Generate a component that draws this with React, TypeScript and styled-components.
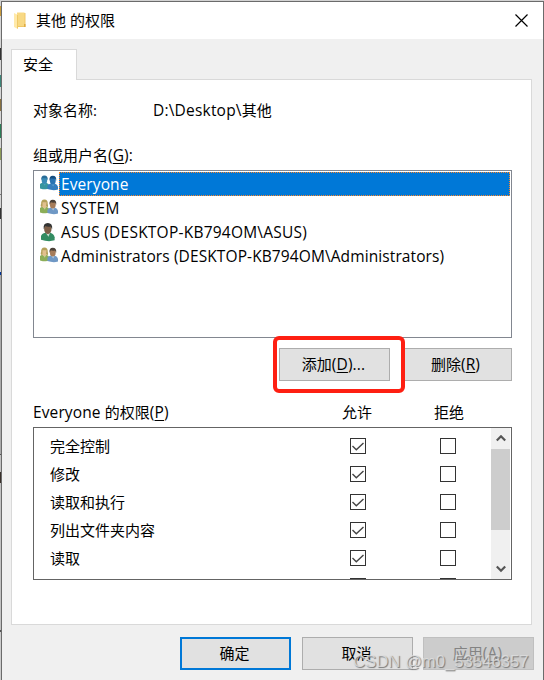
import React from "react";
import styled, { createGlobalStyle } from "styled-components";

const Global = createGlobalStyle`
  *, *::after { box-sizing: border-box; }
  html, body { margin: 0; overflow: hidden; }
  body {
    font-family: "Open Sans", "Noto Sans CJK SC", sans-serif;
    font-size: 15px;
    line-height: 24px;
    color: #000;
  }
  svg { display: block; }
`;

const Desktop = styled.div`
  position: relative;
  width: 544px;
  height: 680px;
  padding: 1px 0 0 1px;
  overflow: hidden;
  background: linear-gradient(
    #d2d2d2 0 6px, #c89b3c 6px 16px, #d6d6d6 16px 48px, #333 48px 60px, #d6d6d6 60px 75px,
    #3d8578 75px 87px, #d6d6d6 87px 99px, #87703f 99px 111px, #d6d6d6 111px 124px,
    #2b7c56 124px 138px, #d6d6d6 138px 148px, #8c9a58 148px 160px, #d6d6d6 160px 194px,
    #777 194px 195px, #d6d6d6 195px 208px, #333 208px 219px, #d6d6d6 219px 272px,
    #003399 272px 275px, #aaa 275px 454px, #555 454px 455px, #c2c2c2 455px 472px,
    #39302a 472px 483px, #c2c2c2 483px 630px, #555 630px 632px, #ccc 632px
  );
`;

const Dialog = styled.main`
  display: flex;
  flex-direction: column;
  width: 543px;
  height: 690px;
  border: 1px solid #6b6b6b;
  background: #f0f0f0;
`;

const TitleBar = styled.header`
  display: flex;
  align-items: center;
  flex: none;
  height: 37px;
  padding: 0 15px 0 11px;
  background: #fff;
`;

const Title = styled.h1`
  flex: 1;
  margin: -2px 0 0 8px;
  font-size: 15px;
  font-weight: 400;
`;

const CloseButton = styled.button`
  padding: 0;
  border: 0;
  margin-top: -1px;
  background: none;
`;

const TabStrip = styled.nav`
  display: flex;
  flex: none;
  height: 31px;
  margin: 10px 0 -1px 9px;
`;

const Tab = styled.div`
  position: relative;
  width: 66px;
  padding: 2px 0 0 11px;
  border: 1px solid #d9d9d9;
  border-bottom: 0;
  background: #fff;
`;

const Panel = styled.section`
  flex: none;
  width: 521px;
  height: 546px;
  margin-left: 9px;
  padding: 18px 19px 0 21px;
  border: 1px solid #d9d9d9;
  background: #fff;
`;

const ObjectRow = styled.div`
  display: grid;
  grid-template-columns: 120px 1fr;
  height: 24px;
`;

const Latin = styled.span<{ $spacing?: number }>`
  font-size: 15.5px;
  letter-spacing: ${(p) => p.$spacing ?? 0.12}px;
`;

const FieldLabel = styled.div`
  height: 24px;
  margin-top: 21px;
`;

const Key = styled.span`
  text-decoration: underline;
  text-decoration-thickness: 1px;
  text-underline-offset: 2px;
`;

const UserList = styled.ul`
  width: 479px;
  height: 168px;
  margin: 3px 0 0;
  padding: 1px;
  border: 1px solid #828790;
  list-style: none;
`;

const UserRow = styled.li`
  display: grid;
  grid-template-columns: 24px 1fr;
  height: 24px;
`;

const UserIcon = styled.span`
  height: 24px;
  padding: 3px 0 0 5px;
`;

const UserName = styled.span<{ $selected?: boolean; $spacing: number }>`
  height: 24px;
  padding-left: 1px;
  border: 1px ${(p) => (p.$selected ? "dotted #ff8728" : "solid transparent")};
  background: ${(p) => (p.$selected ? "#0078d7" : "none")};
  color: ${(p) => (p.$selected ? "#fff" : "#000")};
  font-size: 15.5px;
  line-height: 22px;
  letter-spacing: ${(p) => p.$spacing}px;
  white-space: nowrap;
`;

const ListActions = styled.div`
  display: flex;
  justify-content: flex-end;
  gap: 11px;
  width: 479px;
  margin-top: 10px;
`;

const Button = styled.button<{ $kind?: "primary" | "disabled" }>`
  display: block;
  flex: none;
  width: 111px;
  height: 33px;
  padding: 0 2px 2px 0;
  border: ${(p) =>
    p.$kind === "primary" ? "2px solid #0078d7" : p.$kind === "disabled" ? "1px solid #bfbfbf" : "1px solid #adadad"};
  background: ${(p) => (p.$kind === "disabled" ? "#ccc" : "#e1e1e1")};
  color: ${(p) => (p.$kind === "disabled" ? "#838383" : "#000")};
  font: inherit;
`;

const Marked = styled.div`
  position: relative;
  &::after {
    content: "";
    position: absolute;
    left: -6px;
    top: -12px;
    width: 132px;
    height: 57px;
    border: 4px solid #fe1f12;
    border-radius: 6px;
  }
`;

const PermissionHead = styled.div`
  display: grid;
  grid-template-columns: 278px 92px 92px;
  height: 24px;
  margin-top: 19px;
  text-align: center;
  & > :first-child { text-align: left; }
`;

const PermissionBox = styled.div`
  display: flex;
  width: 479px;
  height: 153px;
  margin-top: 3px;
  padding-right: 1px;
  border: 1px solid #646464;
`;

const PermissionRows = styled.div`
  flex: 1;
  height: 151px;
  padding-top: 4px;
  overflow: hidden;
`;

const PermissionRow = styled.div`
  display: grid;
  grid-template-columns: 300px 90px 16px;
  align-items: center;
  height: 28px;
  padding-left: 16px;
`;

const Check = styled.span`
  width: 16px;
  height: 16px;
  border: 1px solid #333;
  background: #fff;
`;

const ScrollBar = styled.div`
  display: flex;
  flex-direction: column;
  width: 19px;
  background: #f0f0f0;
`;

const ScrollArrow = styled.span`
  display: grid;
  place-items: center;
  height: 21px;
`;

const Thumb = styled.div`
  height: 81px;
  margin-bottom: 28px;
  background: #cdcdcd;
`;

const Footer = styled.footer`
  display: flex;
  gap: 11px;
  margin: 12px 0 0 178px;
  & > :last-child { margin-left: -1px; }
`;

const Watermark = styled.div`
  position: absolute;
  left: 353px;
  top: 650px;
  color: rgba(225, 225, 225, 0.8);
  font-family: "Liberation Sans", sans-serif;
  font-size: 16.7px;
  line-height: 24px;
  white-space: nowrap;
  text-shadow: 1px 1px 1px #777;
`;

const FolderIcon = () => (
  <svg width="15" height="18" viewBox="0 0 15 18">
    <path d="M5 1h7.500v14H5z" fill="#efc666" />
    <path d="M4 .5h7.500v13.500H4z" fill="#f8d984" />
    <path d="M11 12h1.500v3H11z" fill="#dfac43" />
    <path d="M1 1l4 2v14l-4-2z" fill="#ffe9a9" />
    <path d="M4.500 3v13.500" stroke="#efca69" />
  </svg>
);

type Tone = { hair: string; face: string; body: string; shirt: string };

const Person = ({ tone, x, y, scale = 1 }: { tone: Tone; x: number; y: number; scale?: number }) => (
  <g transform={`translate(${x} ${y}) scale(${scale})`}>
    <path d="M0 13.500V10.500Q.5 8.500 3.500 7.800H7.500Q10.500 8.800 11 11.500V14Q6 15.500 0 13.500Z" fill={tone.body} />
    <path d="M3.500 7.500L7.500 7.500 6 11Z" fill={tone.shirt} />
    <ellipse cx="5.500" cy="4.700" rx="3" ry="4.200" fill={tone.face} />
    <path d="M2.200 5Q1.500 0 5.500 0T9 5L7.800 2.800Q5 3.200 3.500 2.500Z" fill={tone.hair} />
  </g>
);

const blueA: Tone = { hair: "#286c98", face: "#398bb5", body: "#36959f", shirt: "#4aa2ba" };
const blueB: Tone = { hair: "#164e81", face: "#2874b2", body: "#347ebd", shirt: "#5a9ed0" };
const woman: Tone = { hair: "#b3a05a", face: "#e1c08e", body: "#8cae58", shirt: "#c9cf9a" };
const man: Tone = { hair: "#4a4038", face: "#a67c5a", body: "#6f98c5", shirt: "#b6cbe0" };
const single: Tone = { hair: "#333433", face: "#7e6049", body: "#338c62", shirt: "#c9ded0" };

const GroupIcon = ({ left, right }: { left: Tone; right: Tone }) => (
  <svg width="18" height="17" viewBox="0 0 18 17">
    <Person tone={left} x={-0.7} y={0.6} scale={0.93} />
    {left === woman && <path d="M2 3Q0 6 1 8L2.500 7.500 2.500 3ZM6.500 3Q9 6 7.500 8.500L6 7Z" fill="#b3a05a" />}
    <Person tone={right} x={7.400} y={0.8} scale={0.98} />
  </svg>
);

const SingleIcon = () => (
  <svg width="18" height="20" viewBox="0 0 18 20">
    <Person tone={single} x={1} y={0} scale={1.240} />
  </svg>
);

const CheckMark = () => (
  <svg width="14" height="14" viewBox="0 0 14 14">
    <path d="M1.500 7l3.800 3.800L12.500 4" fill="none" stroke="#444" strokeWidth="1.400" />
  </svg>
);

const Chevron = ({ down }: { down?: boolean }) => (
  <svg width="10" height="8" viewBox="0 0 10 8">
    <path d={down ? "M.8 1.500L5 5.700 9.200 1.500" : "M.8 5.500L5 1.300 9.200 5.500"} fill="none" stroke="#555" strokeWidth="2.200" />
  </svg>
);

const users = [
  { name: "Everyone", spacing: 0.1, icon: <GroupIcon left={blueA} right={blueB} />, selected: true },
  { name: "SYSTEM", spacing: 0.35, icon: <GroupIcon left={woman} right={man} /> },
  { name: "ASUS (DESKTOP-KB794OM\\ASUS)", spacing: 0.23, icon: <SingleIcon /> },
  { name: "Administrators (DESKTOP-KB794OM\\Administrators)", spacing: 0.1, icon: <GroupIcon left={woman} right={man} /> },
];

const permissions = ["完全控制", "修改", "读取和执行", "列出文件夹内容", "读取", ""];

export default function App() {
  return (
    <>
      <Global />
      <Desktop>
        <Dialog>
          <TitleBar>
            <FolderIcon />
            <Title>其他 的权限</Title>
            <CloseButton aria-label="关闭">
              <svg width="13" height="13" viewBox="0 0 13 13">
                <path d="M.5.500l12 12M12.500.500l-12 12" stroke="#000" strokeWidth="1.200" />
              </svg>
            </CloseButton>
          </TitleBar>
          <TabStrip>
            <Tab>安全</Tab>
          </TabStrip>
          <Panel>
            <ObjectRow>
              <span>对象名称:</span>
              <span><Latin $spacing={0.2}>D:\Desktop\</Latin>其他</span>
            </ObjectRow>
            <FieldLabel>组或用户名<Latin>(<Key>G</Key>):</Latin></FieldLabel>
            <UserList>
              {users.map((u) => (
                <UserRow key={u.name}>
                  <UserIcon>{u.icon}</UserIcon>
                  <UserName $selected={u.selected} $spacing={u.spacing}>{u.name}</UserName>
                </UserRow>
              ))}
            </UserList>
            <ListActions>
              <Marked><Button>添加<Latin>(<Key>D</Key>)...</Latin></Button></Marked>
              <Button>删除<Latin>(<Key>R</Key>)</Latin></Button>
            </ListActions>
            <PermissionHead>
              <span><Latin>Everyone </Latin>的权限<Latin>(<Key>P</Key>)</Latin></span>
              <span>允许</span>
              <span>拒绝</span>
            </PermissionHead>
            <PermissionBox>
              <PermissionRows>
                {permissions.map((name) => (
                  <PermissionRow key={name}>
                    <span>{name}</span>
                    <Check>{name && <CheckMark />}</Check>
                    <Check />
                  </PermissionRow>
                ))}
              </PermissionRows>
              <ScrollBar>
                <ScrollArrow><Chevron /></ScrollArrow>
                <Thumb />
                <ScrollArrow><Chevron down /></ScrollArrow>
              </ScrollBar>
            </PermissionBox>
          </Panel>
          <Footer>
            <Button $kind="primary">确定</Button>
            <Button>取消</Button>
            <Button $kind="disabled">应用<Latin>(<Key>A</Key>)</Latin></Button>
          </Footer>
        </Dialog>
        <Watermark>CSDN @m0_53546357</Watermark>
      </Desktop>
    </>
  );
}
